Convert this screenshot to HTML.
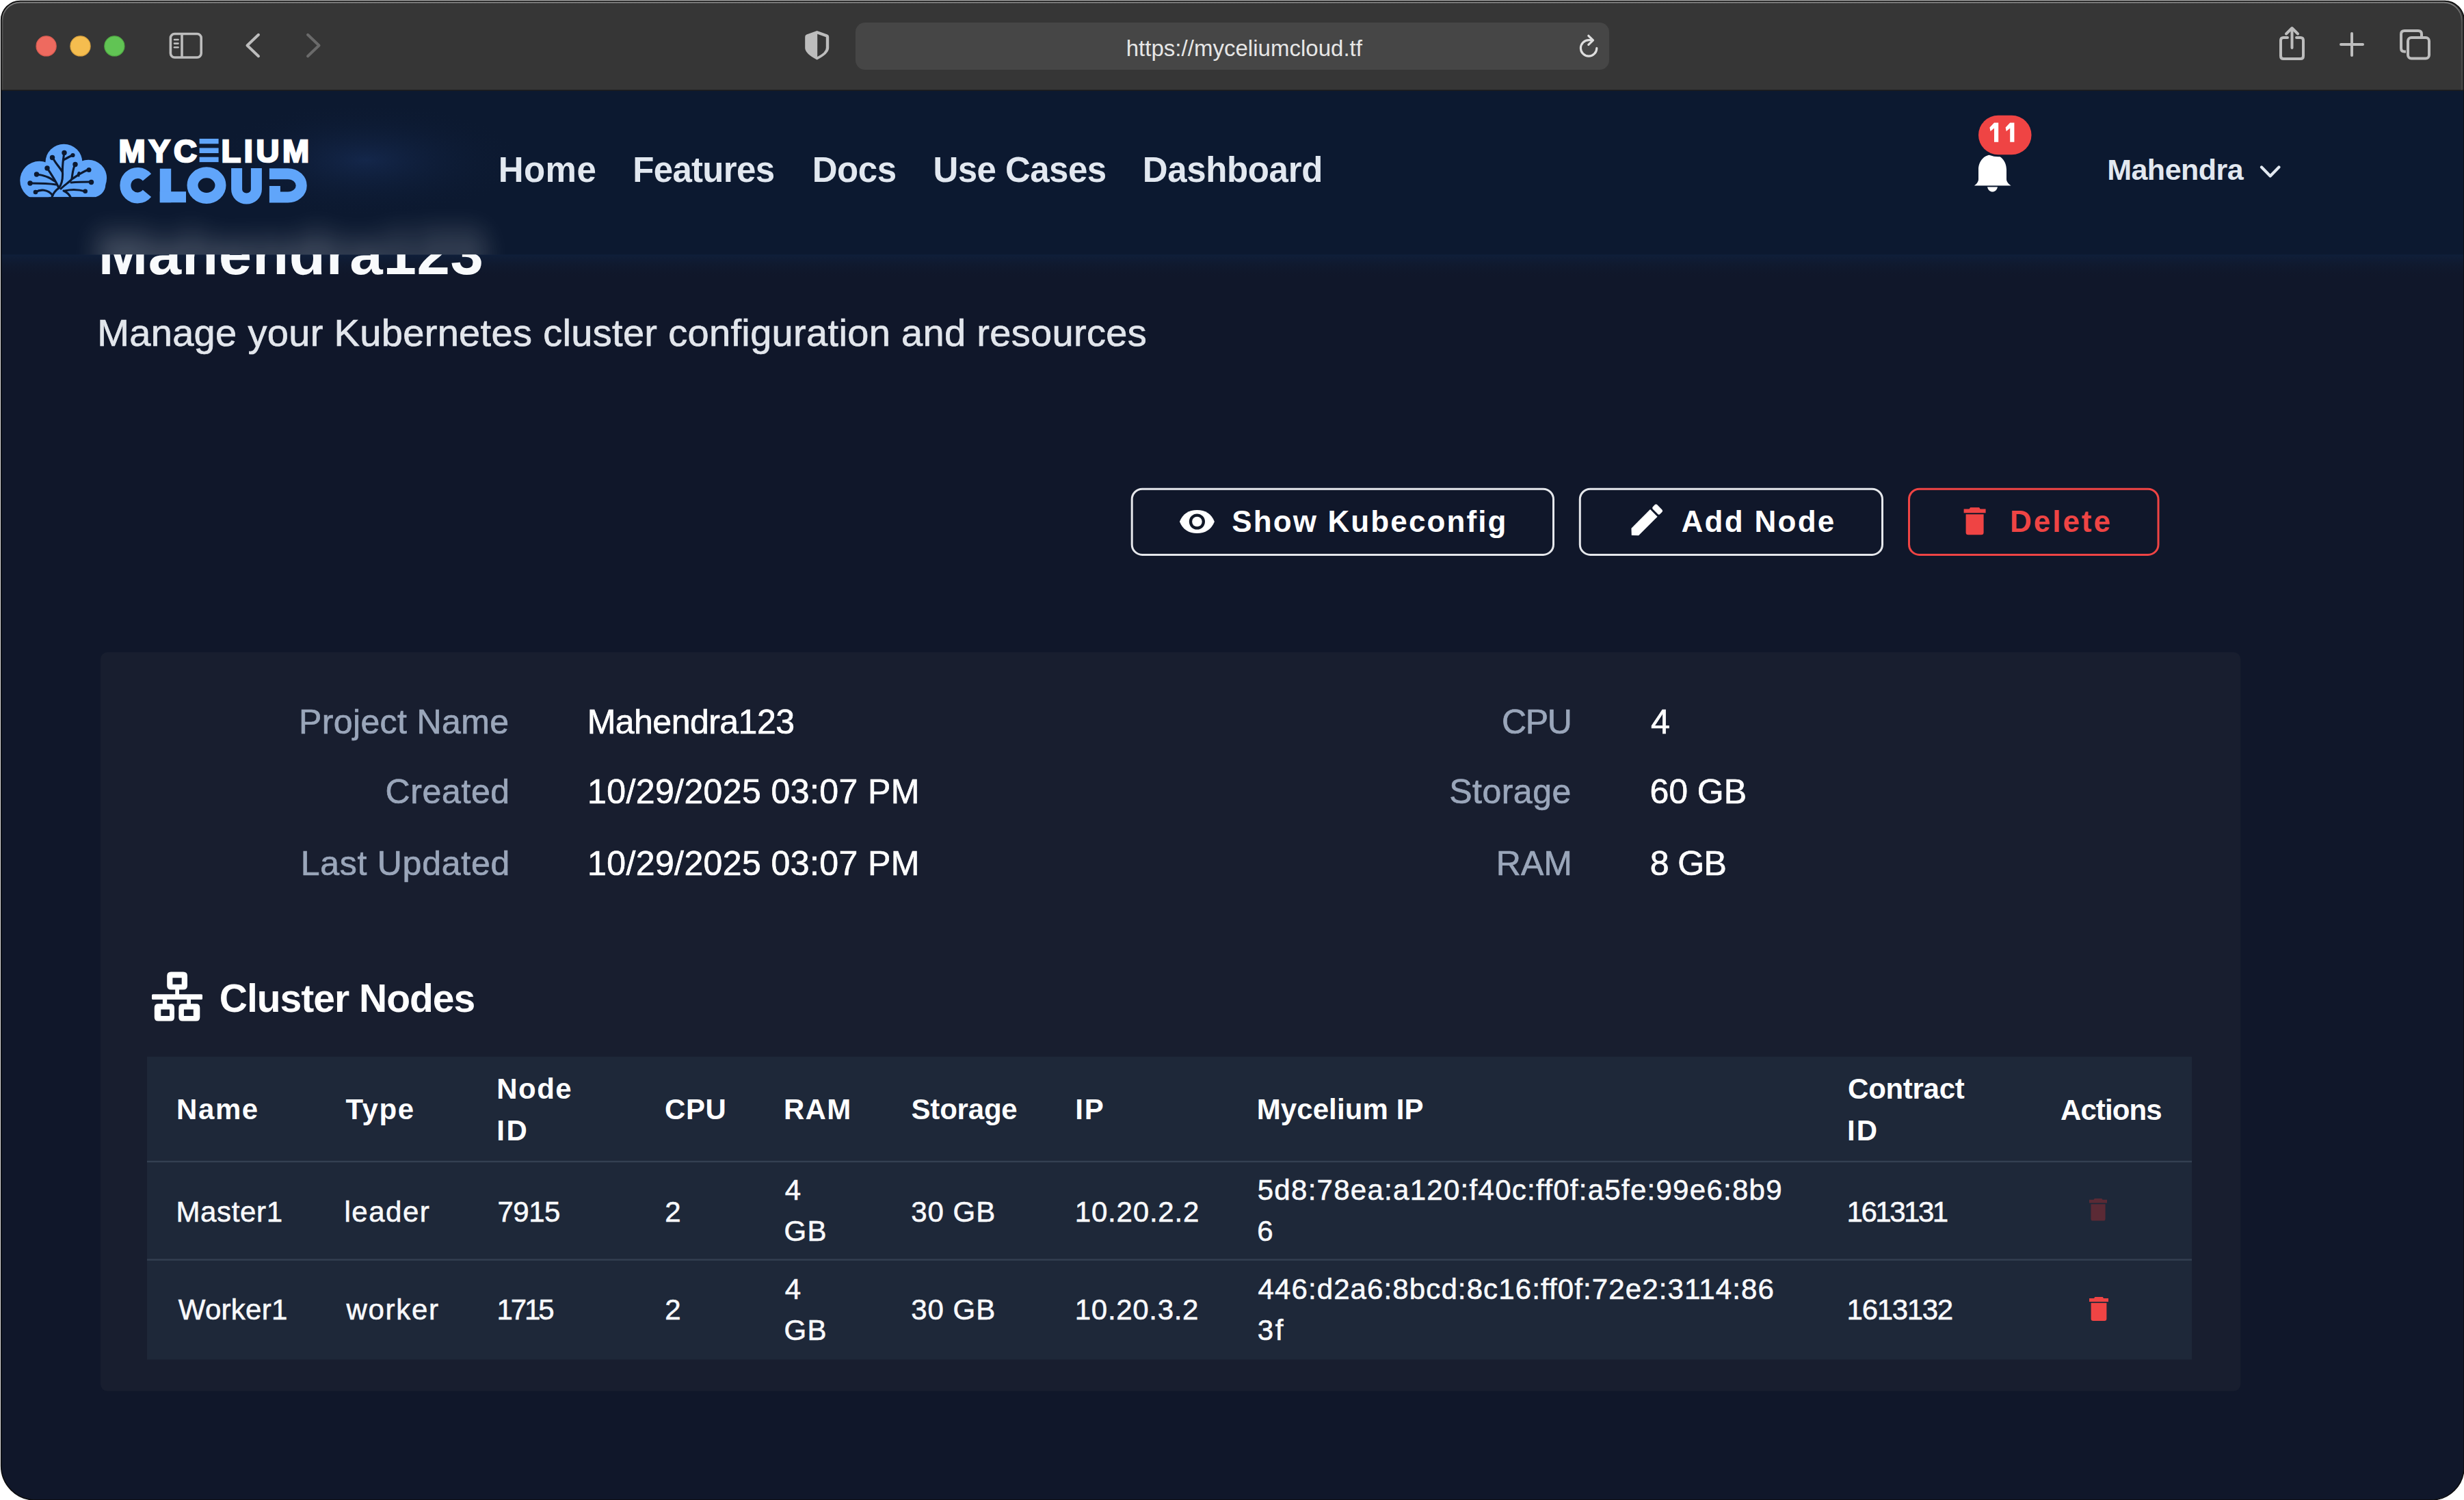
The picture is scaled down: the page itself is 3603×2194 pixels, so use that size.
<!DOCTYPE html>
<html><head><meta charset="utf-8"><title>Mycelium Cloud</title>
<style>
html,body{margin:0;padding:0;background:#ffffff;width:3603px;height:2194px;overflow:hidden}
svg{display:block;position:absolute;left:0;top:0}
text{font-family:"Liberation Sans",sans-serif}
</style></head><body>
<svg width="3603" height="2194" viewBox="0 0 3603 2194">
<defs><clipPath id="win"><path d="M29.6,1.4 H3575 A28,28 0 0 1 3603,29 V2146 A48,48 0 0 1 3555,2194 H51.6 A50,50 0 0 1 1.6,2144 V29.4 A28,28 0 0 1 29.6,1.4 Z"/></clipPath>
<linearGradient id="hl" x1="0" y1="0" x2="0" y2="132" gradientUnits="userSpaceOnUse"><stop offset="0" stop-color="#8c8c8c"/><stop offset="0.25" stop-color="#555555"/><stop offset="1" stop-color="#444444"/></linearGradient>
<clipPath id="tbclip"><rect x="0" y="0" width="3603" height="131.4"/></clipPath></defs>
<g clip-path="url(#win)">
<rect x="0" y="0" width="3603" height="2194" fill="#10172a"/>
<defs><linearGradient id="navshadow" x1="0" y1="0" x2="0" y2="1"><stop offset="0" stop-color="#0f1f3a"/><stop offset="1" stop-color="#10172a" stop-opacity="0"/></linearGradient></defs>
<rect x="0" y="372" width="3603" height="36" fill="url(#navshadow)"/>
<text x="143.66" y="400.70" font-size="87" font-weight="700" fill="#f8fafc" textLength="563.34" lengthAdjust="spacing" >Mahendra123</text>
<text x="142.21" y="505.70" font-size="56" font-weight="400" fill="#e2e6ec" textLength="1534.58" lengthAdjust="spacing" stroke="#e2e6ec" stroke-width="0.7" paint-order="stroke">Manage your Kubernetes cluster configuration and resources</text>
<rect x="1655.2" y="715.2" width="616.3" height="96.2" rx="15" fill="none" stroke="#e5e7eb" stroke-width="3"/>
<rect x="2310.3" y="715.2" width="442.2" height="96.2" rx="15" fill="none" stroke="#e5e7eb" stroke-width="3"/>
<rect x="2791.5" y="715.2" width="364.5" height="96.2" rx="15" fill="none" stroke="#ef4444" stroke-width="3"/>
<text x="1801.28" y="777.50" font-size="44" font-weight="700" fill="#ffffff" textLength="401.22" lengthAdjust="spacing" >Show Kubeconfig</text>
<text x="2458.56" y="777.50" font-size="44" font-weight="700" fill="#ffffff" textLength="223.73" lengthAdjust="spacing" >Add Node</text>
<text x="2939.00" y="777.50" font-size="44" font-weight="700" fill="#ef4444" textLength="146.98" lengthAdjust="spacing" >Delete</text>
<g transform="translate(1750.4,763)"><path d="M-25.5,0 C-21,-11.5 -12,-17 0,-17 C12,-17 21,-11.5 25.5,0 C21,11.5 12,17 0,17 C-12,17 -21,11.5 -25.5,0 Z" fill="#ffffff"/><circle cx="0" cy="0" r="11.6" fill="#111827"/><circle cx="0" cy="0" r="7.3" fill="#ffffff"/></g>
<g transform="translate(2406.3,762.4) rotate(-45)"><path d="M-29,0 L-22,-7.5 L17,-7.5 L17,7.5 L-22,7.5 Z" fill="#ffffff"/><rect x="20" y="-7.5" width="9" height="15" rx="2.5" fill="#ffffff"/></g>
<g transform="translate(2887.6,742.3) scale(1.0000)" fill="#ef4444"><path d="M-6.5,0 H6.5 L8,2.2 H16 V8 H-16 V2.2 H-8 Z"/><path d="M-13,10 H13 V36.5 Q13,40 9.5,40 H-9.5 Q-13,40 -13,36.5 Z"/></g>
<rect x="147" y="954" width="3129.3" height="1080.6" rx="10" fill="#181e2f"/>
<text x="436.90" y="1072.50" font-size="50" font-weight="400" fill="#9aa6ba" textLength="307.28" lengthAdjust="spacing" stroke="#9aa6ba" stroke-width="0.7" paint-order="stroke">Project Name</text>
<text x="858.70" y="1072.50" font-size="50" font-weight="400" fill="#ffffff" textLength="303.27" lengthAdjust="spacing" stroke="#ffffff" stroke-width="0.7" paint-order="stroke">Mahendra123</text>
<text x="563.50" y="1174.90" font-size="50" font-weight="400" fill="#9aa6ba" textLength="181.68" lengthAdjust="spacing" stroke="#9aa6ba" stroke-width="0.7" paint-order="stroke">Created</text>
<text x="859.00" y="1174.90" font-size="50" font-weight="400" fill="#ffffff" textLength="485.35" lengthAdjust="spacing" stroke="#ffffff" stroke-width="0.7" paint-order="stroke">10/29/2025 03:07 PM</text>
<text x="439.70" y="1279.90" font-size="50" font-weight="400" fill="#9aa6ba" textLength="305.54" lengthAdjust="spacing" stroke="#9aa6ba" stroke-width="0.7" paint-order="stroke">Last Updated</text>
<text x="859.00" y="1279.90" font-size="50" font-weight="400" fill="#ffffff" textLength="485.35" lengthAdjust="spacing" stroke="#ffffff" stroke-width="0.7" paint-order="stroke">10/29/2025 03:07 PM</text>
<text x="2196.10" y="1072.60" font-size="50" font-weight="400" fill="#9aa6ba" textLength="102.67" lengthAdjust="spacing" stroke="#9aa6ba" stroke-width="0.7" paint-order="stroke">CPU</text>
<text x="2413.90" y="1072.60" font-size="50" font-weight="400" fill="#ffffff" stroke="#ffffff" stroke-width="0.7" paint-order="stroke">4</text>
<text x="2119.30" y="1174.90" font-size="50" font-weight="400" fill="#9aa6ba" textLength="177.92" lengthAdjust="spacing" stroke="#9aa6ba" stroke-width="0.7" paint-order="stroke">Storage</text>
<text x="2412.50" y="1174.90" font-size="50" font-weight="400" fill="#ffffff" textLength="141.55" lengthAdjust="spacing" stroke="#ffffff" stroke-width="0.7" paint-order="stroke">60 GB</text>
<text x="2187.70" y="1280.00" font-size="50" font-weight="400" fill="#9aa6ba" textLength="111.31" lengthAdjust="spacing" stroke="#9aa6ba" stroke-width="0.7" paint-order="stroke">RAM</text>
<text x="2412.80" y="1280.00" font-size="50" font-weight="400" fill="#ffffff" textLength="112.04" lengthAdjust="spacing" stroke="#ffffff" stroke-width="0.7" paint-order="stroke">8 GB</text>
<g fill="#ffffff"><path fill-rule="evenodd" d="M250,1421.4 H268 Q274,1421.4 274,1427.4 V1441.4 Q274,1447.4 268,1447.4 H250 Q244.2,1447.4 244.2,1441.4 V1427.4 Q244.2,1421.4 250,1421.4 Z M252.4,1430.3 V1439.8 H265.7 V1430.3 Z"/><rect x="256.2" y="1446" width="5.8" height="9"/><rect x="222" y="1454.3" width="74" height="7.7" rx="1.5"/><rect x="237.9" y="1461" width="6.3" height="8"/><rect x="273.3" y="1461" width="5.7" height="8"/><path fill-rule="evenodd" d="M231.5,1468.3 H249.3 Q255,1468.3 255,1474 V1488 Q255,1493.6 249.3,1493.6 H231.5 Q225.8,1493.6 225.8,1488 V1474 Q225.8,1468.3 231.5,1468.3 Z M235.3,1476.5 V1486 H248 V1476.5 Z"/><path fill-rule="evenodd" d="M267,1468.3 H286.6 Q292.3,1468.3 292.3,1474 V1488 Q292.3,1493.6 286.6,1493.6 H267 Q261.3,1493.6 261.3,1488 V1474 Q261.3,1468.3 267,1468.3 Z M268.9,1476.5 V1486 H282.8 V1476.5 Z"/></g>
<text x="320.72" y="1479.50" font-size="57" font-weight="700" fill="#ffffff" textLength="374.52" lengthAdjust="spacing" >Cluster Nodes</text>
<rect x="215" y="1545.6" width="2990" height="443" fill="#1e2839"/>
<rect x="215" y="1697.8" width="2990" height="2.4" fill="#344052"/>
<rect x="215" y="1841.4" width="2990" height="2.4" fill="#344052"/>
<text x="258.03" y="1637.00" font-size="42" font-weight="700" fill="#ffffff" textLength="119.18" lengthAdjust="spacing" >Name</text>
<text x="505.50" y="1637.00" font-size="42" font-weight="700" fill="#ffffff" textLength="99.52" lengthAdjust="spacing" >Type</text>
<text x="726.23" y="1606.70" font-size="42" font-weight="700" fill="#ffffff" textLength="109.40" lengthAdjust="spacing" >Node</text>
<text x="726.23" y="1667.50" font-size="42" font-weight="700" fill="#ffffff" textLength="44.54" lengthAdjust="spacing" >ID</text>
<text x="971.92" y="1637.00" font-size="42" font-weight="700" fill="#ffffff" textLength="89.97" lengthAdjust="spacing" >CPU</text>
<text x="1145.93" y="1637.00" font-size="42" font-weight="700" fill="#ffffff" textLength="98.20" lengthAdjust="spacing" >RAM</text>
<text x="1332.54" y="1637.00" font-size="42" font-weight="700" fill="#ffffff" textLength="155.15" lengthAdjust="spacing" >Storage</text>
<text x="1572.23" y="1637.00" font-size="42" font-weight="700" fill="#ffffff" textLength="41.55" lengthAdjust="spacing" >IP</text>
<text x="1837.63" y="1637.00" font-size="42" font-weight="700" fill="#ffffff" textLength="243.79" lengthAdjust="spacing" >Mycelium IP</text>
<text x="2702.12" y="1607.00" font-size="42" font-weight="700" fill="#ffffff" textLength="170.56" lengthAdjust="spacing" >Contract</text>
<text x="2701.03" y="1668.00" font-size="42" font-weight="700" fill="#ffffff" textLength="43.94" lengthAdjust="spacing" >ID</text>
<text x="3012.91" y="1637.50" font-size="42" font-weight="700" fill="#ffffff" textLength="148.81" lengthAdjust="spacing" >Actions</text>
<text x="257.46" y="1786.60" font-size="42" font-weight="400" fill="#f8f9fb" textLength="155.57" lengthAdjust="spacing" stroke="#f8f9fb" stroke-width="0.6" paint-order="stroke">Master1</text>
<text x="503.54" y="1786.60" font-size="42" font-weight="400" fill="#f8f9fb" textLength="124.20" lengthAdjust="spacing" stroke="#f8f9fb" stroke-width="0.6" paint-order="stroke">leader</text>
<text x="727.42" y="1786.60" font-size="42" font-weight="400" fill="#f8f9fb" textLength="91.97" lengthAdjust="spacing" stroke="#f8f9fb" stroke-width="0.6" paint-order="stroke">7915</text>
<text x="972.30" y="1786.60" font-size="42" font-weight="400" fill="#f8f9fb" stroke="#f8f9fb" stroke-width="0.6" paint-order="stroke">2</text>
<text x="1147.78" y="1755.00" font-size="42" font-weight="400" fill="#f8f9fb" stroke="#f8f9fb" stroke-width="0.6" paint-order="stroke">4</text>
<text x="1146.60" y="1815.00" font-size="42" font-weight="400" fill="#f8f9fb" textLength="61.82" lengthAdjust="spacing" stroke="#f8f9fb" stroke-width="0.6" paint-order="stroke">GB</text>
<text x="1332.20" y="1786.60" font-size="42" font-weight="400" fill="#f8f9fb" textLength="123.12" lengthAdjust="spacing" stroke="#f8f9fb" stroke-width="0.6" paint-order="stroke">30 GB</text>
<text x="1571.81" y="1786.60" font-size="42" font-weight="400" fill="#f8f9fb" textLength="181.51" lengthAdjust="spacing" stroke="#f8f9fb" stroke-width="0.6" paint-order="stroke">10.20.2.2</text>
<text x="1838.72" y="1755.00" font-size="42" font-weight="400" fill="#f8f9fb" textLength="766.89" lengthAdjust="spacing" stroke="#f8f9fb" stroke-width="0.6" paint-order="stroke">5d8:78ea:a120:f40c:ff0f:a5fe:99e6:8b9</text>
<text x="1838.30" y="1815.00" font-size="42" font-weight="400" fill="#f8f9fb" stroke="#f8f9fb" stroke-width="0.6" paint-order="stroke">6</text>
<text x="2700.61" y="1786.60" font-size="42" font-weight="400" fill="#f8f9fb" textLength="148.55" lengthAdjust="spacing" stroke="#f8f9fb" stroke-width="0.6" paint-order="stroke">1613131</text>
<text x="260.73" y="1930.00" font-size="42" font-weight="400" fill="#f8f9fb" textLength="159.59" lengthAdjust="spacing" stroke="#f8f9fb" stroke-width="0.6" paint-order="stroke">Worker1</text>
<text x="506.48" y="1930.00" font-size="42" font-weight="400" fill="#f8f9fb" textLength="134.51" lengthAdjust="spacing" stroke="#f8f9fb" stroke-width="0.6" paint-order="stroke">worker</text>
<text x="726.41" y="1930.00" font-size="42" font-weight="400" fill="#f8f9fb" textLength="84.18" lengthAdjust="spacing" stroke="#f8f9fb" stroke-width="0.6" paint-order="stroke">1715</text>
<text x="972.30" y="1930.00" font-size="42" font-weight="400" fill="#f8f9fb" stroke="#f8f9fb" stroke-width="0.6" paint-order="stroke">2</text>
<text x="1147.78" y="1900.00" font-size="42" font-weight="400" fill="#f8f9fb" stroke="#f8f9fb" stroke-width="0.6" paint-order="stroke">4</text>
<text x="1146.60" y="1959.60" font-size="42" font-weight="400" fill="#f8f9fb" textLength="61.82" lengthAdjust="spacing" stroke="#f8f9fb" stroke-width="0.6" paint-order="stroke">GB</text>
<text x="1332.20" y="1930.00" font-size="42" font-weight="400" fill="#f8f9fb" textLength="123.12" lengthAdjust="spacing" stroke="#f8f9fb" stroke-width="0.6" paint-order="stroke">30 GB</text>
<text x="1571.81" y="1930.00" font-size="42" font-weight="400" fill="#f8f9fb" textLength="180.61" lengthAdjust="spacing" stroke="#f8f9fb" stroke-width="0.6" paint-order="stroke">10.20.3.2</text>
<text x="1839.48" y="1900.00" font-size="42" font-weight="400" fill="#f8f9fb" textLength="754.37" lengthAdjust="spacing" stroke="#f8f9fb" stroke-width="0.6" paint-order="stroke">446:d2a6:8bcd:8c16:ff0f:72e2:3114:86</text>
<text x="1838.80" y="1959.60" font-size="42" font-weight="400" fill="#f8f9fb" textLength="37.51" lengthAdjust="spacing" stroke="#f8f9fb" stroke-width="0.6" paint-order="stroke">3f</text>
<text x="2700.61" y="1930.00" font-size="42" font-weight="400" fill="#f8f9fb" textLength="155.54" lengthAdjust="spacing" stroke="#f8f9fb" stroke-width="0.6" paint-order="stroke">1613132</text>
<g transform="translate(3068,1753) scale(0.8125)" fill="#5b2a35"><path d="M-6.5,0 H6.5 L8,2.2 H16 V8 H-16 V2.2 H-8 Z"/><path d="M-13,10 H13 V36.5 Q13,40 9.5,40 H-9.5 Q-13,40 -13,36.5 Z"/></g>
<g transform="translate(3069,1897) scale(0.8750)" fill="#ef4444"><path d="M-6.5,0 H6.5 L8,2.2 H16 V8 H-16 V2.2 H-8 Z"/><path d="M-13,10 H13 V36.5 Q13,40 9.5,40 H-9.5 Q-13,40 -13,36.5 Z"/></g>
<defs><clipPath id="navclip"><rect x="0" y="132" width="3603" height="240.4"/></clipPath><filter id="blur" x="-20%" y="-100%" width="140%" height="300%"><feGaussianBlur stdDeviation="20"/></filter><radialGradient id="glow" cx="0.5" cy="0.5" r="0.5"><stop offset="0" stop-color="#15294f" stop-opacity="0.85"/><stop offset="1" stop-color="#0c1930" stop-opacity="0"/></radialGradient></defs>
<g clip-path="url(#navclip)"><rect x="0" y="132" width="3603" height="240.4" fill="#0c1930"/><ellipse cx="535" cy="234" rx="230" ry="85" fill="url(#glow)"/><g filter="url(#blur)" opacity="0.42"><text x="143.66" y="400.70" font-size="87" font-weight="700" fill="#f8fafc" textLength="563.34" lengthAdjust="spacing" >Mahendra123</text></g></g>
<g><clipPath id="cloudclip"><rect x="0" y="0" width="400" height="288.3"/></clipPath><g clip-path="url(#cloudclip)" fill="#60a5fa"><circle cx="57.5" cy="264" r="28.2"/><circle cx="93.4" cy="237.7" r="27"/><circle cx="129.3" cy="260.5" r="26.8"/><rect x="48" y="250" width="92" height="38.3"/><path d="M128,250 H141 V288.3 H128 Z"/><circle cx="136" cy="270" r="18.3"/></g><g stroke="#0c1930" stroke-width="3.1" fill="none" stroke-linecap="round"><path d="M76,288 C78,282 82,278 86,275 C90,270 92,262 91.5,252 C91,240 93,230 94,223"/><path d="M91.5,252 C88,245 80,238 77,230"/><path d="M93,234 C96,232 100,230 106,227"/><path d="M86,275 C82,265 75,255 69,246"/><path d="M80,265 C72,259 64,256 53,255"/><path d="M82,270 C70,268 55,268 44,268"/><path d="M77,286 C70,276 58,277 52,281"/><path d="M89,276 C95,270 102,266 105,262 C106,252 107,246 110,240"/><path d="M105,262 C112,258 118,252 130,248"/><path d="M115,257 C114,255 114,254 115.5,253"/><path d="M104,267 C115,266 124,266 134,266"/><path d="M95,279 C108,276 118,278 125,280"/><path d="M93,279 C97,281 101,284 103,288"/></g><g fill="#0c1930"><circle cx="94" cy="223.5" r="3.7"/><circle cx="76.5" cy="230.5" r="3.7"/><circle cx="106.5" cy="227" r="3.1"/><circle cx="69" cy="246" r="3.7"/><circle cx="53.5" cy="255" r="3.7"/><circle cx="44" cy="268" r="3.7"/><circle cx="52" cy="281" r="3.3"/><circle cx="110" cy="240.5" r="3.7"/><circle cx="130" cy="248.5" r="3.5"/><circle cx="115.5" cy="253" r="2"/><circle cx="133.5" cy="266.5" r="3.7"/><circle cx="124.7" cy="279.7" r="3.3"/></g></g>
<text x="173.40" y="237.00" font-size="47" font-weight="700" fill="#ffffff" textLength="114.43" lengthAdjust="spacing" stroke="#ffffff" stroke-width="2.6" paint-order="stroke">MYC</text>
<text x="323.40" y="237.00" font-size="47" font-weight="700" fill="#ffffff" textLength="128.79" lengthAdjust="spacing" stroke="#ffffff" stroke-width="2.6" paint-order="stroke">LIUM</text>
<g fill="#60a5fa"><rect x="291.6" y="202.9" width="28" height="7.4"/><rect x="291.6" y="216.4" width="28" height="7.6"/><rect x="291.6" y="229.7" width="28" height="7.4"/></g>
<g fill="none" stroke="#60a5fa" stroke-width="16"><path d="M214.96,259.42 A17.9,18.25 0 1 0 214.96,282.88"/><ellipse cx="302" cy="271.1" rx="20.5" ry="18.8"/><path d="M346.1,246 V277 A14.4,13.5 0 0 0 374.9,277 V246"/><path d="M393.9,254.2 H421 A19.7,17.2 0 0 1 421,288.6 H401.9 V272"/></g>
<g fill="#60a5fa"><rect x="233.8" y="246.7" width="16.4" height="49.5"/><rect x="233.8" y="280.2" width="38.2" height="16"/></g>
<text x="728.63" y="266.00" font-size="51" font-weight="700" fill="#e2e8f0" textLength="143.12" lengthAdjust="spacing" >Home</text>
<text x="925.23" y="266.00" font-size="51" font-weight="700" fill="#e2e8f0" textLength="207.83" lengthAdjust="spacing" >Features</text>
<text x="1187.63" y="266.00" font-size="51" font-weight="700" fill="#e2e8f0" textLength="123.37" lengthAdjust="spacing" >Docs</text>
<text x="1364.44" y="266.00" font-size="51" font-weight="700" fill="#e2e8f0" textLength="253.66" lengthAdjust="spacing" >Use Cases</text>
<text x="1670.63" y="266.00" font-size="51" font-weight="700" fill="#e2e8f0" textLength="263.69" lengthAdjust="spacing" >Dashboard</text>
<g fill="#ffffff"><path d="M913.5,225.9 C925,225.9 934,235 934,248 V262 C934,266 937,269 940.6,271.4 H886.9 C890.5,269 893,266 893,262 V248 C893,235 902,225.9 913.5,225.9 Z" transform="translate(2000,0)"/><path d="M2906,273.5 H2921 C2920,278 2917,280.5 2913.5,280.5 C2910,280.5 2907,278 2906,273.5 Z"/></g>
<rect x="2890" y="165.7" width="83.5" height="63.6" rx="31.8" fill="#0c1930"/>
<rect x="2893" y="168.7" width="77.5" height="57.6" rx="28.8" fill="#ef4444"/>
<g fill="#ffffff"><path d="M2916,179.5 H2922.2 V207.7 H2916 V187.5 L2910.5,192 L2909.4,186.5 Z"/><path d="M2939.2,179.5 H2945.4 V207.7 H2939.2 V187.5 L2933.7,192 L2932.6,186.5 Z"/></g>
<text x="3081.16" y="263.00" font-size="43" font-weight="700" fill="#e2e8f0" textLength="199.54" lengthAdjust="spacing" >Mahendra</text>
<path d="M3307,244.5 L3319.7,257.5 L3332.4,244.5" fill="none" stroke="#e2e8f0" stroke-width="4.2" stroke-linecap="round" stroke-linejoin="round"/>
<rect x="0" y="0" width="3603" height="132" fill="#363636"/><rect x="0" y="131.4" width="3603" height="1.4" fill="#1b1b1b"/>
<circle cx="67.6" cy="67.4" r="14.6" fill="#ee6a5f" stroke="#d85c51" stroke-width="1.2"/>
<circle cx="117.5" cy="67.4" r="14.6" fill="#f5bd4f" stroke="#d9a23f" stroke-width="1.2"/>
<circle cx="167.4" cy="67.4" r="14.6" fill="#61c454" stroke="#50a943" stroke-width="1.2"/>
<g fill="none" stroke="#bdbdbd" stroke-width="3.6" stroke-linecap="round"><rect x="249.4" y="49.5" width="44.8" height="34.5" rx="6"/><line x1="266" y1="50" x2="266" y2="83.5"/></g><g stroke="#bdbdbd" stroke-width="2.6" stroke-linecap="round"><line x1="255" y1="58" x2="260.5" y2="58"/><line x1="255" y1="63.6" x2="260.5" y2="63.6"/><line x1="255" y1="69.2" x2="260.5" y2="69.2"/></g>
<path d="M378,50.8 L361.5,66.5 L378,82.2" fill="none" stroke="#bdbdbd" stroke-width="4" stroke-linecap="round" stroke-linejoin="round"/>
<path d="M450,50.8 L466.5,66.5 L450,82.2" fill="none" stroke="#6a6a6a" stroke-width="4" stroke-linecap="round" stroke-linejoin="round"/>
<path d="M1194.7,45 L1210,50.6 Q1212.2,51.5 1212.2,54 V70 Q1212.2,78.5 1194.7,87.4 Q1177.2,78.5 1177.2,70 V54 Q1177.2,51.5 1179.4,50.6 Z" fill="#bdbdbd"/><path d="M1195.2,49.8 L1207.8,54.3 V70 Q1207.8,76.5 1195.2,83 Z" fill="#363636"/>
<rect x="1251" y="33" width="1102" height="69" rx="14" fill="#464646"/>
<text x="1646.69" y="82.00" font-size="33" font-weight="400" fill="#e6e6e6" textLength="345.25" lengthAdjust="spacing" >https://myceliumcloud.tf</text>
<path d="M2334.8,70.4 A11.7,11.7 0 1 1 2323.1,58.7 H2326" fill="none" stroke="#dedede" stroke-width="3.2" stroke-linecap="round"/><path d="M2322.8,52.3 L2329.5,58.8 L2322.8,65.3" fill="none" stroke="#dedede" stroke-width="3.2" stroke-linecap="round" stroke-linejoin="round"/>
<g fill="none" stroke="#bdbdbd" stroke-width="4" stroke-linecap="round" stroke-linejoin="round"><path d="M3345,55 H3339 Q3335,55 3335,59 V82 Q3335,86 3339,86 H3364 Q3368,86 3368,82 V59 Q3368,55 3364,55 H3358"/><line x1="3351.5" y1="42" x2="3351.5" y2="70"/><path d="M3343,49.5 L3351.5,41 L3360,49.5"/></g>
<g stroke="#bdbdbd" stroke-width="4" stroke-linecap="round"><line x1="3439" y1="49" x2="3439" y2="81"/><line x1="3423" y1="65" x2="3455" y2="65"/></g>
<g fill="none" stroke="#bdbdbd" stroke-width="4" stroke-linejoin="round"><path d="M3518,75.5 H3516 Q3511,75.5 3511,70.5 V50 Q3511,45 3516,45 H3536 Q3541,45 3541,50 V55"/><rect x="3521" y="55" width="31" height="30.5" rx="5"/></g>
</g>
<path d="M29.6,1.4 H3575 A28,28 0 0 1 3603,29 V2146 A48,48 0 0 1 3555,2194 H51.6 A50,50 0 0 1 1.6,2144 V29.4 A28,28 0 0 1 29.6,1.4 Z" fill="none" stroke="#0b0b0b" stroke-width="1.5"/>
<path clip-path="url(#tbclip)" d="M30,3.6 H3573 A26,26 0 0 1 3599.6,29.5 V140 M3.6,140 V29.5 A26,26 0 0 1 30,3.6" fill="none" stroke="url(#hl)" stroke-width="1.6"/>
</svg>
</body></html>
